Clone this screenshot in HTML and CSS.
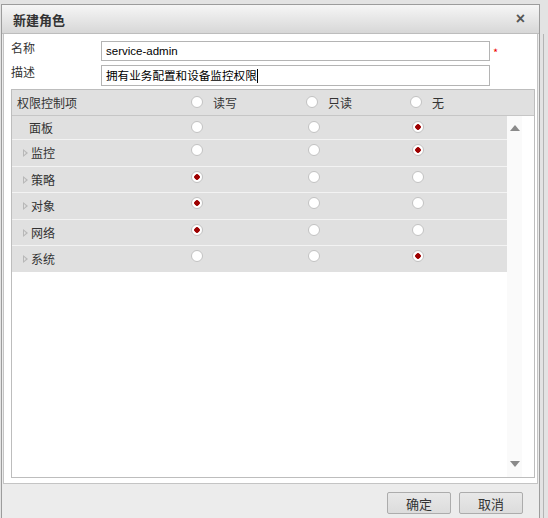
FILE: index.html
```html
<!DOCTYPE html>
<html lang="zh-CN">
<head>
    <meta charset="UTF-8">
    <title>新建角色</title>
    <link rel="stylesheet" href="styles.css">
</head>
<body>
    <div class="page">
        <div class="dialog">
            <div class="dialog-title">
                <span>新建角色</span>
                <span class="close">×</span>
            </div>
            <div class="dialog-body">
                <div class="form-row">
                    <label>名称</label>
                    <div class="field latin">service-admin</div>
                    <span class="required">*</span>
                </div>
                <div class="form-row last">
                    <label>描述</label>
                    <div class="field">拥有业务配置和设备监控权限<span class="caret"></span></div>
                </div>

                <div class="perm-table">
                    <div class="perm-head">
                        <div class="name-cell">权限控制项</div>
                        <div class="head-cell"><input type="radio" name="all"><span>读写</span></div>
                        <div class="head-cell"><input type="radio" name="all"><span>只读</span></div>
                        <div class="head-cell"><input type="radio" name="all"><span>无</span></div>
                    </div>
                    <div class="perm-body">
                        <div class="perm-rows">
                            <div class="perm-row first">
                                <div class="name-cell plain">面板</div>
                                <div><input type="radio" name="p1"></div>
                                <div><input type="radio" name="p1"></div>
                                <div><input type="radio" name="p1" checked></div>
                            </div>
                            <div class="perm-row">
                                <div class="name-cell"><i class="expand"></i>监控</div>
                                <div><input type="radio" name="p2"></div>
                                <div><input type="radio" name="p2"></div>
                                <div><input type="radio" name="p2" checked></div>
                            </div>
                            <div class="perm-row">
                                <div class="name-cell"><i class="expand"></i>策略</div>
                                <div><input type="radio" name="p3" checked></div>
                                <div><input type="radio" name="p3"></div>
                                <div><input type="radio" name="p3"></div>
                            </div>
                            <div class="perm-row">
                                <div class="name-cell"><i class="expand"></i>对象</div>
                                <div><input type="radio" name="p4" checked></div>
                                <div><input type="radio" name="p4"></div>
                                <div><input type="radio" name="p4"></div>
                            </div>
                            <div class="perm-row">
                                <div class="name-cell"><i class="expand"></i>网络</div>
                                <div><input type="radio" name="p5" checked></div>
                                <div><input type="radio" name="p5"></div>
                                <div><input type="radio" name="p5"></div>
                            </div>
                            <div class="perm-row">
                                <div class="name-cell"><i class="expand"></i>系统</div>
                                <div><input type="radio" name="p6"></div>
                                <div><input type="radio" name="p6"></div>
                                <div><input type="radio" name="p6" checked></div>
                            </div>
                        </div>
                        <div class="scrollbar">
                            <span class="arrow up"></span>
                            <span class="arrow down"></span>
                        </div>
                    </div>
                </div>
            </div>
            <div class="dialog-footer">
                <button>确定</button>
                <button>取消</button>
            </div>
        </div>
        <div class="edge"></div>
    </div>
</body>
</html>
```

FILE: styles.css
```css
/* Base */
* {
    box-sizing: border-box;
}

body {
    margin: 0;
    background-color: #e3e3e3;
    font-family: "Noto Sans CJK SC", "Liberation Sans", sans-serif;
    font-size: 12px;
    color: #333;
}

.page {
    display: flex;
    height: 518px;
    overflow: hidden;
}

/* Dialog frame */
.dialog {
    margin: 4px 0 0 1px;
    width: 539px;
    height: 530px;
    border: 1px solid #9c9c9c;
    background-color: #ececec;
    display: flex;
    flex-direction: column;
}

.dialog-title {
    height: 29px;
    padding: 0 14px 0 11px;
    display: flex;
    align-items: center;
    justify-content: space-between;
    background: linear-gradient(#f6f6f6, #d7d7d7);
    border-bottom: 1px solid #bdbdbd;
    font-size: 13px;
    font-weight: bold;
    color: #333;
}

.close {
    font-family: "Liberation Sans", sans-serif;
    font-size: 16px;
    color: #555;
}

.dialog-body {
    margin: 0 1px;
    height: 450px;
    padding: 7px 0 0 7px;
    background-color: #fff;
    border: 1px solid #c4c4c4;
    border-top: none;
}

/* Form */
.form-row {
    display: flex;
    align-items: flex-start;
    margin-bottom: 4px;
}

.form-row.last {
    margin-bottom: 3px;
}

.form-row label {
    width: 90px;
    line-height: 14px;
}

.field {
    width: 389px;
    height: 20px;
    padding: 0 4px;
    border: 1px solid #b4b4b4;
    line-height: 18px;
    font-size: 11.6px;
    color: #000;
}

.form-row.last .field {
    height: 21px;
    line-height: 19px;
}

.field.latin {
    font-family: "Liberation Sans", sans-serif;
    font-size: 11.5px;
}

.caret {
    display: inline-block;
    width: 1px;
    height: 14px;
    background-color: #000;
    vertical-align: -3px;
}

.required {
    margin: 3px 0 0 3px;
    color: #e00;
    font-size: 11px;
}

/* Permission table */
.perm-table {
    width: 524px;
    height: 389px;
    border: 1px solid #bdbdbd;
    display: flex;
    flex-direction: column;
}

.perm-head {
    height: 26px;
    padding-bottom: 1px;
    display: grid;
    grid-template-columns: 179px 115px 104px 1fr;
    align-items: center;
    background-color: #e0e0e0;
    border-bottom: 1px solid #c6c6c6;
}

.perm-head .name-cell {
    padding-left: 5px;
}

.head-cell {
    display: flex;
    align-items: center;
    gap: 10px;
}

.perm-body {
    flex: 1;
    display: flex;
}

.perm-rows {
    width: 495px;
}

.perm-row {
    height: 26.5px;
    display: grid;
    grid-template-columns: 179px 117px 104px 1fr;
    align-items: start;
    background-color: #e0e0e0;
    border-top: 1px solid #f3f3f3;
}

.perm-row.first {
    height: 23px;
    border-top: none;
}

.perm-row > div {
    padding-top: 4px;
}

.perm-row.first > div {
    padding-top: 5px;
}

.perm-row .name-cell {
    padding-left: 11px;
    padding-top: 6px;
    display: flex;
    align-items: center;
    line-height: 14px;
}

.perm-row.first .name-cell {
    padding-top: 5px;
}

.perm-row .name-cell.plain {
    padding-left: 17px;
}

.expand {
    width: 0;
    height: 0;
    margin-right: 3px;
    border-top: 4px solid transparent;
    border-bottom: 4px solid transparent;
    border-left: 5px solid #b8b8b8;
    position: relative;
}

.expand::after {
    content: "";
    position: absolute;
    left: -4px;
    top: -2px;
    border-top: 2px solid transparent;
    border-bottom: 2px solid transparent;
    border-left: 2.5px solid #e0e0e0;
}

/* Radios */
input[type="radio"] {
    appearance: none;
    margin: 0;
    width: 12px;
    height: 12px;
    border: 1px solid #c2c2c2;
    border-radius: 50%;
    background-color: #fff;
    display: block;
}

input[type="radio"]:checked {
    background: radial-gradient(circle, #9e0000 0 2.5px, #fff 3px);
}

/* Scrollbar */
.scrollbar {
    width: 15px;
    background-color: #fafafa;
    display: flex;
    flex-direction: column;
    align-items: center;
    justify-content: space-between;
    padding: 9px 0 10px;
}

.arrow {
    width: 0;
    height: 0;
    border-left: 5px solid transparent;
    border-right: 5px solid transparent;
}

.arrow.up {
    border-bottom: 6px solid #8a8a8a;
}

.arrow.down {
    border-top: 6px solid #8a8a8a;
}

/* Footer */
.dialog-footer {
    display: flex;
    justify-content: flex-end;
    gap: 8px;
    padding: 8px 16px 0 0;
}

.dialog-footer button {
    width: 64px;
    height: 22px;
    border: 1px solid #acacac;
    border-radius: 2px;
    background: linear-gradient(#e8e8e8, #dcdcdc);
    font-family: "Noto Sans CJK SC", sans-serif;
    font-size: 13px;
    color: #333;
    padding: 0;
}

.edge {
    margin: 34px 0 0 3px;
    width: 5px;
    border-left: 1px solid #b4b4b4;
}
```
